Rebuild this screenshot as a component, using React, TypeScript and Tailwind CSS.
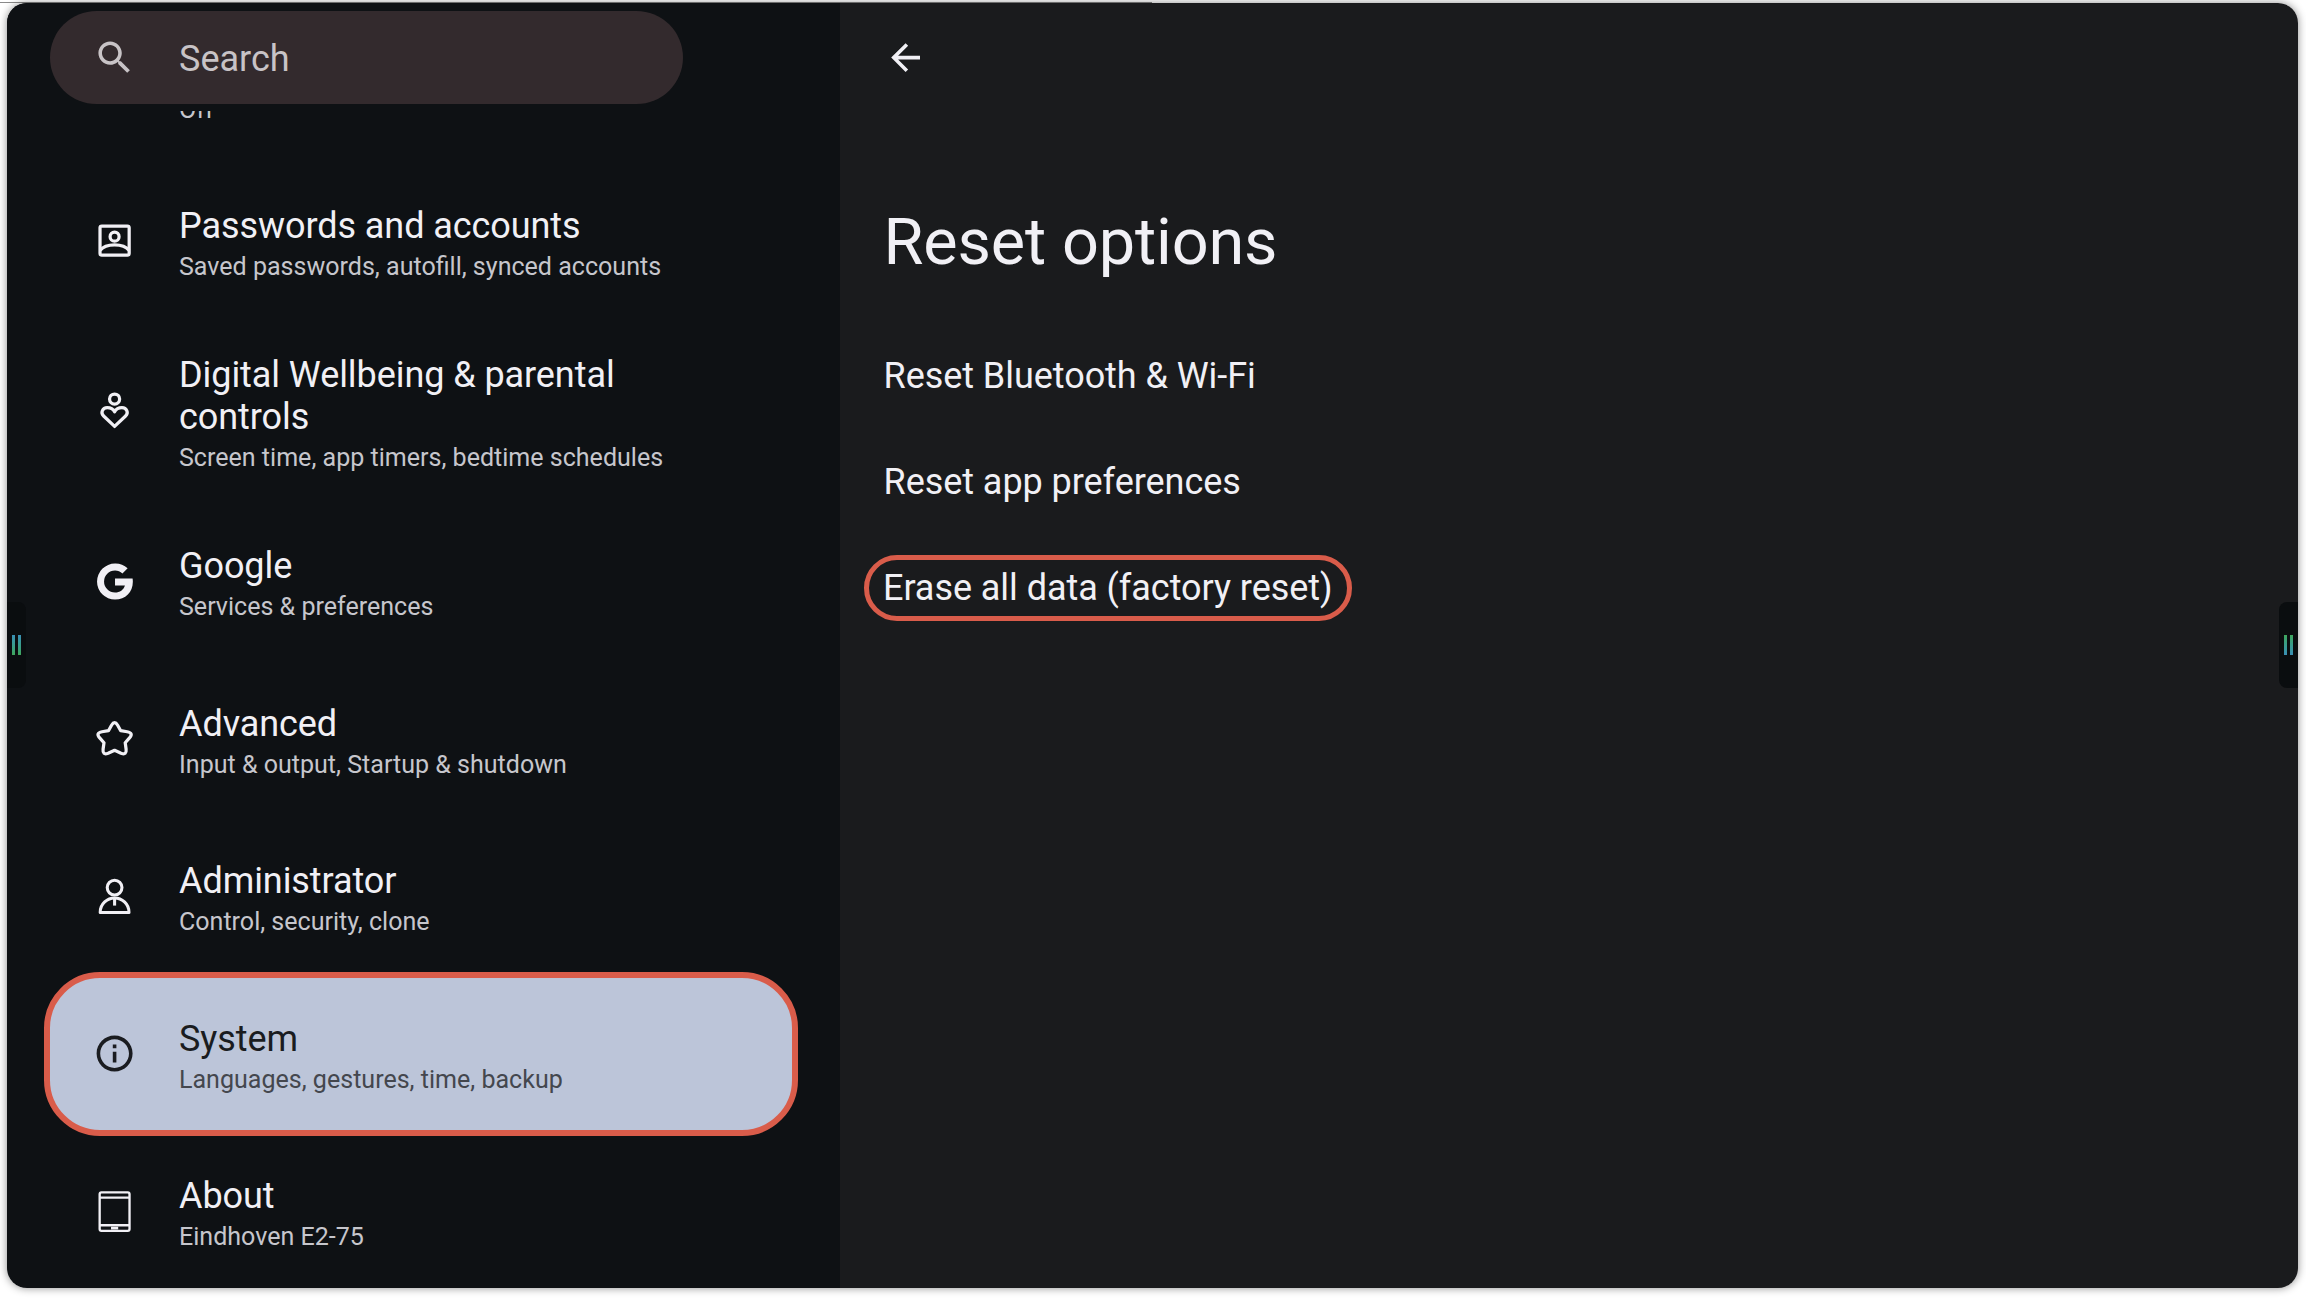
const ic = 'h-[43.2px] w-[43.2px] overflow-visible';

function SearchIcon() {
  return (
    <svg viewBox="0 0 24 24" fill="currentColor" className={ic}>
      <path d="M15.5 14h-.79l-.28-.27C15.41 12.59 16 11.11 16 9.5 16 5.91 13.09 3 9.5 3S3 5.91 3 9.5 5.91 16 9.5 16c1.61 0 3.09-.59 4.23-1.57l.27.28v.79l5 4.99L20.49 19l-4.99-5zm-6 0C7.01 14 5 11.99 5 9.5S7.01 5 9.5 5 14 7.01 14 9.5 11.99 14 9.5 14z" />
    </svg>
  );
}

function BackIcon() {
  return (
    <svg viewBox="0 0 24 24" fill="currentColor" className={ic}>
      <path d="M20 11H7.83l5.59-5.59L12 4l-8 8 8 8 1.41-1.41L7.83 13H20v-2z" />
    </svg>
  );
}

function AccountIcon() {
  return (
    <svg viewBox="0 0 24 24" fill="none" stroke="currentColor" strokeWidth="1.8" className={ic}>
      <rect x="3.9" y="3.9" width="16.2" height="16.2" rx="1" />
      <circle cx="12" cy="9.8" r="2.5" />
      <path d="M4 17.4C7 13.4 17 13.4 20 17.4" />
    </svg>
  );
}

function WellbeingIcon() {
  return (
    <svg viewBox="0 0 24 24" fill="none" stroke="currentColor" strokeWidth="1.8" strokeLinejoin="round" className={ic}>
      <circle cx="12" cy="5.6" r="2.8" />
      <path d="M12 20.8 5.9 15C4 13.2 5.3 10.4 7.9 10.4 9.7 10.4 11.2 11.2 12 12.7 12.8 11.2 14.3 10.4 16.1 10.4 18.7 10.4 20 13.2 18.1 15Z" />
    </svg>
  );
}

function GoogleIcon() {
  return (
    <svg viewBox="0 0 24 24" fill="currentColor" className={ic}>
      <path d="M12.24 10.3v3.9h5.5c-.7 2.4-2.8 3.9-5.5 3.9a6.1 6.1 0 0 1 0-12.2c1.6 0 3 .55 4.1 1.6l2.9-2.9A10.1 10.1 0 0 0 12.24 2a10 10 0 1 0 0 20c5.8 0 9.9-4.1 9.9-9.9 0-.6-.05-1.2-.15-1.8z" />
    </svg>
  );
}

function StarIcon() {
  return (
    <svg viewBox="0 0 24 24" fill="none" stroke="currentColor" strokeWidth="1.8" strokeLinejoin="round" className={ic}>
      <path d="M10.3 4.6Q12 1.7 13.7 4.6L15.4 7.6 19 8.2Q22.6 8.9 20.4 11.5L17.9 14.3 18.4 17.9Q18.8 21.4 15.6 20.1L12 18.5 8.4 20.1Q5.2 21.4 5.6 17.9L6.1 14.3 3.6 11.5Q1.4 8.9 5 8.2L8.6 7.6Z" />
    </svg>
  );
}

function AdminIcon() {
  return (
    <svg viewBox="0 0 24 24" fill="none" stroke="currentColor" strokeWidth="1.7" strokeLinejoin="round" className={ic}>
      <circle cx="12" cy="7" r="4.1" />
      <path d="M4 20.8C4 16 8 12.8 12 12.8 16 12.8 20 16 20 20.8Z" />
      <path d="M12 12.8V17" />
    </svg>
  );
}

function InfoIcon() {
  return (
    <svg viewBox="0 0 24 24" fill="currentColor" className={ic}>
      <path d="M11 7h2v2h-2zm0 4h2v6h-2zm1-9C6.48 2 2 6.48 2 12s4.48 10 10 10 10-4.48 10-10S17.52 2 12 2zm0 18c-4.41 0-8-3.59-8-8s3.59-8 8-8 8 3.59 8 8-3.59 8-8 8z" />
    </svg>
  );
}

function TabletIcon() {
  return (
    <svg viewBox="0 0 24 24" fill="none" stroke="currentColor" strokeWidth="1.3" className={ic}>
      <rect x="3.7" y="1.3" width="16.6" height="21.4" rx="1" />
      <path d="M3.7 4.2H20.3M3.7 19.6H20.3" />
      <path d="M10 21.2H14" strokeWidth="1.6" />
    </svg>
  );
}

const rows = [
  { title: 'Passwords and accounts', sub: 'Saved passwords, autofill, synced accounts', icon: <AccountIcon /> },
  { title: 'Digital Wellbeing & parental controls', sub: 'Screen time, app timers, bedtime schedules', icon: <WellbeingIcon />, tall: true },
  { title: 'Google', sub: 'Services & preferences', icon: <GoogleIcon /> },
  { title: 'Advanced', sub: 'Input & output, Startup & shutdown', icon: <StarIcon /> },
  { title: 'Administrator', sub: 'Control, security, clone', icon: <AdminIcon /> },
  { title: 'System', sub: 'Languages, gestures, time, backup', icon: <InfoIcon />, active: true },
  { title: 'About', sub: 'Eindhoven E2-75', icon: <TabletIcon /> },
];

function SettingsRow({ title, sub, icon, tall, active }: { title: string; sub: string; icon: React.ReactNode; tall?: boolean; active?: boolean }) {
  return (
    <div
      className={
        'ml-[37px] mr-[42px] flex items-center ' +
        (tall ? 'h-[183px] ' : active ? '' : 'h-[157.5px] ') +
        (active ? '-my-[3.25px] h-[164px] rounded-[56px] border-[6px] border-[#d95c4a] bg-[#bcc5d9] text-[#1a1c20]' : 'text-[#f1f0f5]')
      }
    >
      <div className={'flex shrink-0 items-center justify-center ' + (active ? 'ml-[40px] w-[50px]' : 'ml-[46px] w-[50px]')}>{icon}</div>
      <div className="ml-[39px] w-[510px] pt-[9px]">
        <div className="text-[36px] leading-[42px] tracking-[-0.07px]">{title}</div>
        <div className={'text-[25.05px] leading-[39px] ' + (active ? 'text-[#44474e]' : 'text-[#c6c6cc]')}>{sub}</div>
      </div>
    </div>
  );
}

function Handle({ side }: { side: 'left' | 'right' }) {
  const left = side === 'left';
  const bar = 'h-[20px] w-[3px] ' + (left ? 'bg-gradient-to-b from-[#3a8fb5] to-[#3fa65a]' : 'bg-gradient-to-b from-[#3fa65a] to-[#3a8fb5]');
  return (
    <div
      className={
        'absolute top-[599px] flex h-[86px] w-[19px] items-center justify-center gap-[3px] bg-[#0a0d0f] ' +
        (left ? 'left-0 rounded-r-[8px]' : 'right-0 rounded-l-[8px]')
      }
    >
      <div className={bar} />
      <div className={bar} />
    </div>
  );
}

export default function App() {
  return (
    <div className="relative h-[1300px] w-[2306px] overflow-hidden bg-white pt-[3px] pr-[8px] pb-[12px] pl-[7px] font-['Roboto',sans-serif]">
      <div className="absolute top-[2px] left-0 h-px w-[1152px] bg-[#8a8a8a]" />
      <div className="relative flex h-full overflow-hidden rounded-[20px] shadow-[0_0_8px_rgba(0,0,0,0.45)]">
        <div className="relative w-[833px] shrink-0 overflow-hidden bg-[#0e1114]">
          <div className="flex h-[159px] items-end pb-[33px] pl-[172px] text-[25.05px] leading-[38px] text-[#c6c6cc]">Off</div>
          {rows.map((r) => (
            <SettingsRow key={r.title} {...r} />
          ))}
          <div className="absolute top-0 left-0 h-[108px] w-full bg-[#0e1114]" />
          <div className="absolute top-[8px] left-[43px] flex h-[93px] w-[633px] items-center rounded-full bg-[#332a2d] text-[#c8c3c6]">
            <div className="ml-[40px] flex w-[50px] justify-center"><SearchIcon /></div>
            <span className="mt-[2px] ml-[39px] text-[36px]">Search</span>
          </div>
        </div>

        <div className="flex-1 bg-[#1a1b1d] pl-[43.5px] text-[#f1f0f5]">
          <div className="flex h-[110px] items-center">
            <BackIcon />
          </div>
          <h1 className="mt-[91px] text-[64.8px] leading-[76px] font-normal tracking-[-0.15px]">Reset options</h1>
          <div className="mt-[43px] flex flex-col items-start text-[36px] tracking-[-0.05px]">
            <div className="flex h-[106px] items-center">Reset Bluetooth & Wi-Fi</div>
            <div className="flex h-[106px] items-center">Reset app preferences</div>
            <div className="mt-[20px] -ml-[20px] flex h-[66px] items-center rounded-full border-[5.5px] border-[#d95c4a] px-[14.5px]">Erase all data (factory reset)</div>
          </div>
        </div>

        <Handle side="left" />
        <Handle side="right" />
      </div>
    </div>
  );
}
